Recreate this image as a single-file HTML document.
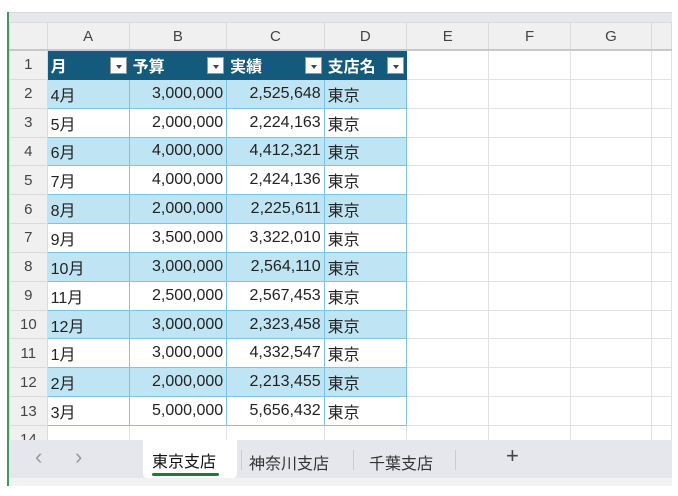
<!DOCTYPE html><html><head><style>
body{margin:0;width:678px;height:496px;background:#fff;position:relative;overflow:hidden;font-family:"Liberation Sans","Noto Sans CJK JP",sans-serif}
.wrap{position:absolute;left:7px;top:12px;width:663px;height:474px;background:#fff;border-left:2px solid #3c9a5f;overflow:hidden}
.band{position:absolute;left:0;top:0;right:0;height:10px;background:#e6e7ec;border-top:1px solid #d8d8d8}
table{position:absolute;left:0;top:10px;border-collapse:collapse;table-layout:fixed}
td{height:27.85px;padding:0 3px;border:1px solid #e1e1e1;font-size:16px;color:#222;white-space:nowrap;overflow:hidden}
.h td{height:26px;background:#f0f0f0;text-align:center;color:#444;font-size:15px;border-color:#dadada;border-bottom:2px solid #c8c8c8}
td.rn{background:#f0f0f0;text-align:center;color:#444;font-size:15px;border-color:#dadada}
tr.th td.t{background:#135a7c;color:#fff;font-weight:bold;position:relative;border-color:#135a7c}
.dd{position:absolute;right:2px;top:6px;width:17px;height:17px;background:#fff;border:1px solid #999;box-sizing:border-box}
.dd:after{content:"";position:absolute;left:5px;top:7px;border:3px solid transparent;border-top:4px solid #444}
tr.b td.t{background:#bfe4f3}
td.t{border-color:#7cc3e6}
.r{text-align:right}
.tabs{position:absolute;left:0;top:428px;width:663px;height:38px;background:#e6e7ec}
.strip{position:absolute;left:0;top:466px;width:663px;height:8px;background:#f2f2f2;border-bottom:1px solid #ddd}
.tab{position:absolute;top:8px;font-size:16px;color:#333}
</style></head><body><div class="wrap"><div class="band"></div>
<table>
<colgroup><col style="width:38px"><col style="width:83px"><col style="width:98px"><col style="width:98px"><col style="width:83px"><col style="width:84px"><col style="width:83px"><col style="width:83px"><col style="width:20px"></colgroup>
<tr class="h"><td style="background:#f0f0f0"></td><td>A</td><td>B</td><td>C</td><td>D</td><td>E</td><td>F</td><td>G</td><td></td></tr>
<tr class="th"><td class="rn">1</td><td class="t">月<span class="dd"></span></td><td class="t">予算<span class="dd"></span></td><td class="t">実績<span class="dd"></span></td><td class="t">支店名<span class="dd"></span></td><td></td><td></td><td></td><td></td></tr>
<tr class="b"><td class="rn">2</td><td class="t">4月</td><td class="t r">3,000,000</td><td class="t r">2,525,648</td><td class="t">東京</td><td></td><td></td><td></td><td></td></tr>
<tr><td class="rn">3</td><td class="t">5月</td><td class="t r">2,000,000</td><td class="t r">2,224,163</td><td class="t">東京</td><td></td><td></td><td></td><td></td></tr>
<tr class="b"><td class="rn">4</td><td class="t">6月</td><td class="t r">4,000,000</td><td class="t r">4,412,321</td><td class="t">東京</td><td></td><td></td><td></td><td></td></tr>
<tr><td class="rn">5</td><td class="t">7月</td><td class="t r">4,000,000</td><td class="t r">2,424,136</td><td class="t">東京</td><td></td><td></td><td></td><td></td></tr>
<tr class="b"><td class="rn">6</td><td class="t">8月</td><td class="t r">2,000,000</td><td class="t r">2,225,611</td><td class="t">東京</td><td></td><td></td><td></td><td></td></tr>
<tr><td class="rn">7</td><td class="t">9月</td><td class="t r">3,500,000</td><td class="t r">3,322,010</td><td class="t">東京</td><td></td><td></td><td></td><td></td></tr>
<tr class="b"><td class="rn">8</td><td class="t">10月</td><td class="t r">3,000,000</td><td class="t r">2,564,110</td><td class="t">東京</td><td></td><td></td><td></td><td></td></tr>
<tr><td class="rn">9</td><td class="t">11月</td><td class="t r">2,500,000</td><td class="t r">2,567,453</td><td class="t">東京</td><td></td><td></td><td></td><td></td></tr>
<tr class="b"><td class="rn">10</td><td class="t">12月</td><td class="t r">3,000,000</td><td class="t r">2,323,458</td><td class="t">東京</td><td></td><td></td><td></td><td></td></tr>
<tr><td class="rn">11</td><td class="t">1月</td><td class="t r">3,000,000</td><td class="t r">4,332,547</td><td class="t">東京</td><td></td><td></td><td></td><td></td></tr>
<tr class="b"><td class="rn">12</td><td class="t">2月</td><td class="t r">2,000,000</td><td class="t r">2,213,455</td><td class="t">東京</td><td></td><td></td><td></td><td></td></tr>
<tr><td class="rn">13</td><td class="t">3月</td><td class="t r">5,000,000</td><td class="t r">5,656,432</td><td class="t">東京</td><td></td><td></td><td></td><td></td></tr>
<tr><td class="rn">14</td><td></td><td></td><td></td><td></td><td></td><td></td><td></td><td></td></tr>
</table>
<div class="tabs">
<span class="tab" style="left:26px;color:#999;top:4px;font-size:22px">&#x2039;</span><span class="tab" style="left:66px;color:#999;top:4px;font-size:22px">&#x203A;</span>
<div style="position:absolute;left:134px;top:0;width:94px;height:38px;background:#fff;border-radius:0 0 4px 4px"></div>
<span class="tab" style="left:143px;color:#111">東京支店</span>
<div style="position:absolute;left:143px;top:33px;width:67px;height:3px;background:#1e7a3c;border-radius:2px"></div>
<div style="position:absolute;left:232px;top:10px;width:1px;height:20px;background:#ccc"></div>
<span class="tab" style="left:240px;top:10px">神奈川支店</span>
<div style="position:absolute;left:344px;top:10px;width:1px;height:20px;background:#ccc"></div>
<span class="tab" style="left:360px;top:10px">千葉支店</span>
<div style="position:absolute;left:446px;top:10px;width:1px;height:20px;background:#ccc"></div>
<span class="tab" style="left:497px;font-size:22px;top:3px;color:#444">+</span>
</div><div class="strip"></div>
</div></body></html>
